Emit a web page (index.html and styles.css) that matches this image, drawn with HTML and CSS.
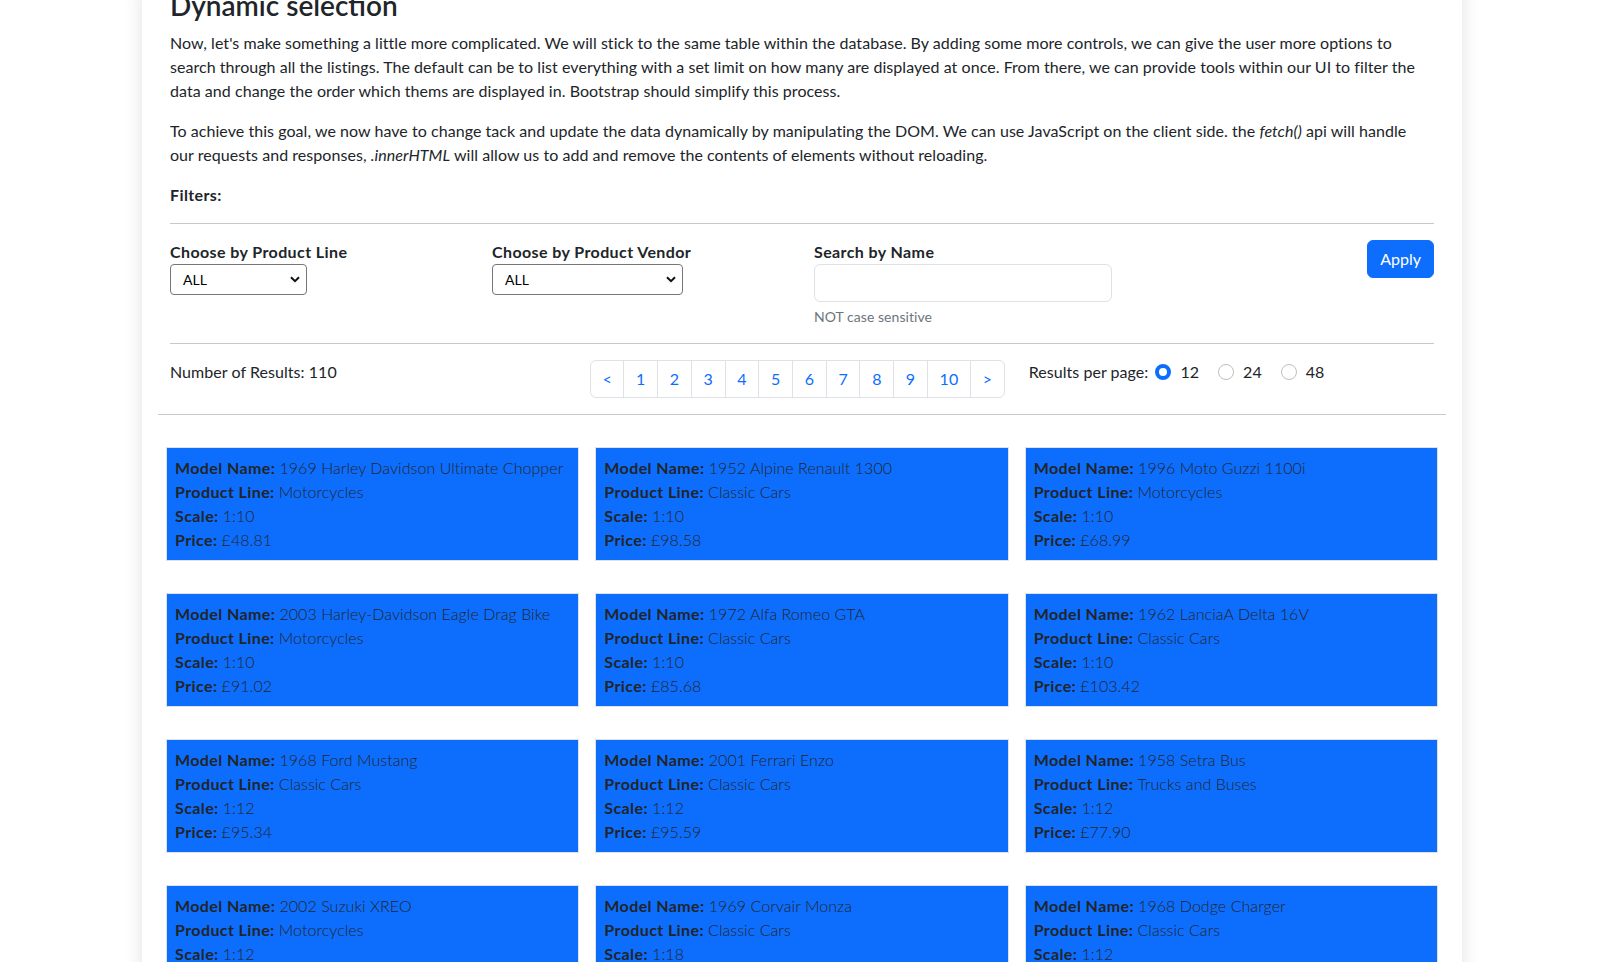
FILE: index.html
```html
<!DOCTYPE html>
<html lang="en">
<head>
<meta charset="utf-8">
<title>Dynamic selection</title>
<link rel="stylesheet" href="styles.css">
</head>
<body>
<div class="sheet">
  <section class="intro">
    <h3 class="title">Dynamic selection</h3>
    <p>Now, let's make something a little more complicated. We will stick to the same table within the database. By adding some more controls, we can give the user more options to search through all the listings. The default can be to list everything with a set limit on how many are displayed at once. From there, we can provide tools within our UI to filter the data and change the order which thems are displayed in. Bootstrap should simplify this process.</p>
    <p>To achieve this goal, we now have to change tack and update the data dynamically by manipulating the DOM. We can use JavaScript on the client side. the <em>fetch()</em> api will handle our requests and responses, <em>.innerHTML</em> will allow us to add and remove the contents of elements without reloading.</p>
    <p class="strong-line">Filters:</p>
    <hr class="rule">
    <div class="filter-row">
      <div class="field">
        <label class="field-label">Choose by Product Line</label>
        <div class="select-wrap">
          <select class="select select-line"><option>ALL</option></select>
          <svg class="chev" width="10" height="7" viewBox="0 0 10 7"><path d="M1 1.2 L5 5.2 L9 1.2" fill="none" stroke="#111" stroke-width="2"/></svg>
        </div>
      </div>
      <div class="field">
        <label class="field-label">Choose by Product Vendor</label>
        <div class="select-wrap">
          <select class="select select-vendor"><option>ALL</option></select>
          <svg class="chev" width="10" height="7" viewBox="0 0 10 7"><path d="M1 1.2 L5 5.2 L9 1.2" fill="none" stroke="#111" stroke-width="2"/></svg>
        </div>
      </div>
      <div class="field">
        <label class="field-label">Search by Name</label>
        <input class="search" type="text">
        <div class="hint">NOT case sensitive</div>
      </div>
      <div class="field field-end">
        <button class="apply" type="button">Apply</button>
      </div>
    </div>
    <hr class="rule">
    <div class="results-row">
      <div class="count">Number of Results: 110</div>
      <div class="pager-cell">
        <ul class="pager">
          <li><a class="page first">&lt;</a></li>
          <li><a class="page">1</a></li>
          <li><a class="page">2</a></li>
          <li><a class="page">3</a></li>
          <li><a class="page">4</a></li>
          <li><a class="page">5</a></li>
          <li><a class="page">6</a></li>
          <li><a class="page">7</a></li>
          <li><a class="page">8</a></li>
          <li><a class="page">9</a></li>
          <li><a class="page">10</a></li>
          <li><a class="page last">&gt;</a></li>
        </ul>
      </div>
      <div class="per-page">
        <span class="per-label">Results per page:</span>
        <span class="radio-item"><span class="radio checked"></span><span>12</span></span>
        <span class="radio-item"><span class="radio"></span><span>24</span></span>
        <span class="radio-item"><span class="radio"></span><span>48</span></span>
      </div>
    </div>
  </section>
  <hr class="rule divider">
  <div class="grid">
    <div class="card"><div><b>Model Name:</b> <span class="val">1969 Harley Davidson Ultimate Chopper</span></div><div><b>Product Line:</b> <span class="val">Motorcycles</span></div><div><b>Scale:</b> <span class="val">1:10</span></div><div><b>Price:</b> <span class="val">£48.81</span></div></div>
    <div class="card"><div><b>Model Name:</b> <span class="val">1952 Alpine Renault 1300</span></div><div><b>Product Line:</b> <span class="val">Classic Cars</span></div><div><b>Scale:</b> <span class="val">1:10</span></div><div><b>Price:</b> <span class="val">£98.58</span></div></div>
    <div class="card"><div><b>Model Name:</b> <span class="val">1996 Moto Guzzi 1100i</span></div><div><b>Product Line:</b> <span class="val">Motorcycles</span></div><div><b>Scale:</b> <span class="val">1:10</span></div><div><b>Price:</b> <span class="val">£68.99</span></div></div>
    <div class="card"><div><b>Model Name:</b> <span class="val">2003 Harley-Davidson Eagle Drag Bike</span></div><div><b>Product Line:</b> <span class="val">Motorcycles</span></div><div><b>Scale:</b> <span class="val">1:10</span></div><div><b>Price:</b> <span class="val">£91.02</span></div></div>
    <div class="card"><div><b>Model Name:</b> <span class="val">1972 Alfa Romeo GTA</span></div><div><b>Product Line:</b> <span class="val">Classic Cars</span></div><div><b>Scale:</b> <span class="val">1:10</span></div><div><b>Price:</b> <span class="val">£85.68</span></div></div>
    <div class="card"><div><b>Model Name:</b> <span class="val">1962 LanciaA Delta 16V</span></div><div><b>Product Line:</b> <span class="val">Classic Cars</span></div><div><b>Scale:</b> <span class="val">1:10</span></div><div><b>Price:</b> <span class="val">£103.42</span></div></div>
    <div class="card"><div><b>Model Name:</b> <span class="val">1968 Ford Mustang</span></div><div><b>Product Line:</b> <span class="val">Classic Cars</span></div><div><b>Scale:</b> <span class="val">1:12</span></div><div><b>Price:</b> <span class="val">£95.34</span></div></div>
    <div class="card"><div><b>Model Name:</b> <span class="val">2001 Ferrari Enzo</span></div><div><b>Product Line:</b> <span class="val">Classic Cars</span></div><div><b>Scale:</b> <span class="val">1:12</span></div><div><b>Price:</b> <span class="val">£95.59</span></div></div>
    <div class="card"><div><b>Model Name:</b> <span class="val">1958 Setra Bus</span></div><div><b>Product Line:</b> <span class="val">Trucks and Buses</span></div><div><b>Scale:</b> <span class="val">1:12</span></div><div><b>Price:</b> <span class="val">£77.90</span></div></div>
    <div class="card"><div><b>Model Name:</b> <span class="val">2002 Suzuki XREO</span></div><div><b>Product Line:</b> <span class="val">Motorcycles</span></div><div><b>Scale:</b> <span class="val">1:12</span></div><div><b>Price:</b> <span class="val">£66.27</span></div></div>
    <div class="card"><div><b>Model Name:</b> <span class="val">1969 Corvair Monza</span></div><div><b>Product Line:</b> <span class="val">Classic Cars</span></div><div><b>Scale:</b> <span class="val">1:18</span></div><div><b>Price:</b> <span class="val">£89.14</span></div></div>
    <div class="card"><div><b>Model Name:</b> <span class="val">1968 Dodge Charger</span></div><div><b>Product Line:</b> <span class="val">Classic Cars</span></div><div><b>Scale:</b> <span class="val">1:12</span></div><div><b>Price:</b> <span class="val">£75.16</span></div></div>
  </div>
</div>
</body>
</html>
```

FILE: styles.css
```css
* { box-sizing: border-box; }
html, body { margin: 0; padding: 0; background: #fff; }
body {
  font-family: Lato, "Liberation Sans", sans-serif;
  font-size: 16px;
  line-height: 24px;
  letter-spacing: 0.05px;
  color: #212529;
}
b, .strong-line, .field-label { letter-spacing: 0.4px; }
.sheet {
  width: 1320px;
  margin: 0 auto;
  padding: 0 16px 40px;
  min-height: 100vh;
  box-shadow: 0 0 18px rgba(0, 0, 0, 0.12);
  background: #fff;
}
.intro { padding: 0 12px; }
.title {
  font-size: 28px;
  font-weight: 600;
  line-height: 1.2;
  letter-spacing: 0;
  margin: -11px 0 8px;
}
.intro p { margin: 0 0 16px; }
.strong-line { font-weight: 700; }
.rule {
  border: 0;
  border-top: 1px solid #c8c9ca;
  margin: 16px 0;
  height: 0;
}
.filter-row {
  display: grid;
  grid-template-columns: repeat(4, 1fr);
  column-gap: 24px;
  align-items: start;
}
.field { display: flex; flex-direction: column; align-items: flex-start; }
.field-end { align-items: flex-end; }
.field-label { font-weight: 700; line-height: 24px; }
.select-wrap { position: relative; display: inline-block; }
.select {
  appearance: none;
  -webkit-appearance: none;
  display: block;
  height: 31px;
  border: 1px solid #767676;
  border-radius: 4px;
  background: #fff;
  color: #000;
  font-family: inherit;
  font-size: 14px;
  padding: 0 24px 0 12px;
  margin: 0;
}
.select-line { width: 137px; }
.select-vendor { width: 191px; }
.chev { position: absolute; right: 7px; top: 12px; }
.search {
  display: block;
  width: 100%;
  height: 38px;
  border: 1px solid #dee2e6;
  border-radius: 6px;
  background: #fff;
  margin: 0;
  padding: 6px 12px;
  font-family: inherit;
  font-size: 16px;
}
.hint {
  margin-top: 4px;
  font-size: 14px;
  line-height: 21px;
  color: #6c757d;
}
.apply {
  background: #0d6efd;
  color: #fff;
  border: 1px solid #0d6efd;
  border-radius: 6px;
  font-family: inherit;
  font-size: 16px;
  line-height: 24px;
  padding: 6px 12px;
  margin: 0;
}
.results-row {
  display: grid;
  grid-template-columns: repeat(3, 1fr);
  column-gap: 24px;
  align-items: start;
}
.count { line-height: 24px; }
.pager-cell { display: flex; justify-content: flex-end; min-width: 0; }
.pager {
  display: flex;
  flex-shrink: 0;
  list-style: none;
  margin: 0;
  padding: 0;
}
.pager li + li { margin-left: -1px; }
.page {
  display: block;
  padding: 6px 11.7px;
  border: 1px solid #dee2e6;
  color: #0d6efd;
  line-height: 24px;
  background: #fff;
}
.page.first { border-radius: 6px 0 0 6px; }
.page.last { border-radius: 0 6px 6px 0; }
.per-page { display: flex; align-items: center; line-height: 24px; }
.per-label { margin-right: 7px; }
.radio-item { display: inline-flex; align-items: center; margin-right: 19px; }
.radio {
  width: 16px;
  height: 16px;
  border-radius: 50%;
  border: 1px solid #bfbfbf;
  background: #fff;
  margin-right: 9px;
}
.radio.checked { border: 4px solid #0d6efd; }
.divider { margin: 16px 0; }
.grid {
  display: grid;
  grid-template-columns: repeat(3, 1fr);
}
.card {
  margin: 16px 8px;
  padding: 8px;
  border: 1px solid #dee2e6;
  background: #0d6efd;
  color: #212529;
  line-height: 24px;
}
.card b { font-weight: 700; }
.val { font-weight: 300; }
```
